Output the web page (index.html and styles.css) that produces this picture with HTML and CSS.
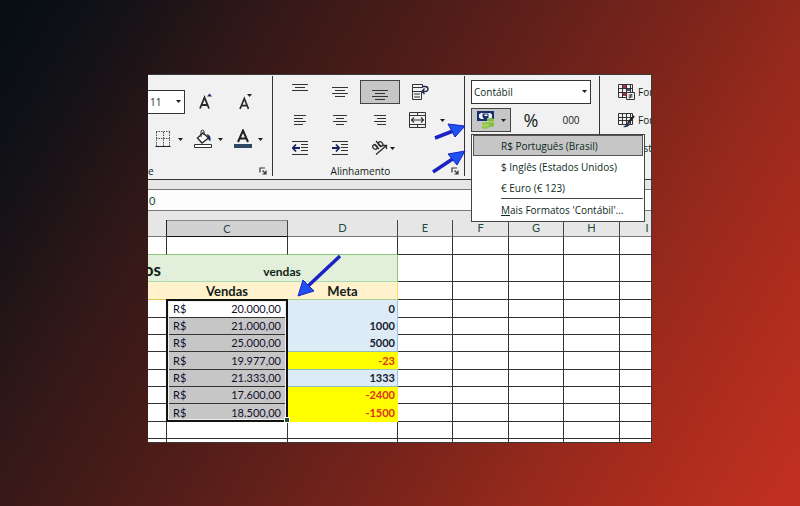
FILE: index.html
```html
<!DOCTYPE html>
<html lang="pt-BR">
<head>
  <meta charset="UTF-8" />
  <meta name="viewport" content="width=device-width, initial-scale=1.0" />
  <title>Formato Contábil</title>
  <link rel="stylesheet" href="styles.css">
</head>
<body>
  <svg class="defs" width="0" height="0" aria-hidden="true">
    <symbol id="caret" viewBox="0 0 5 3"><path d="M0 0h5L2.500 3z" fill="#1c1c1c"/></symbol>
    <symbol id="launcher" viewBox="0 0 8 8">
      <path d="M1 5.500V1h5M3.500 3.500l3 3M7 3.500V7H3.500" fill="none" stroke="#333" stroke-width="1.200"/>
    </symbol>
  </svg>

  <main class="window">
    <div class="ribbon">
      <section class="group group-font">
        <div class="row">
          <div class="select size">
            <select aria-label="Tamanho da fonte"><option>11</option></select>
            <svg class="caret"><use href="#caret"/></svg>
          </div>
          <button class="tool" aria-label="Aumentar fonte">
            <svg width="16" height="18" viewBox="0 0 16 18">
              <path d="M3 15.500L7.500 4.500 12 15.500M4.500 12h6" fill="none" stroke="#2a2a2a" stroke-width="1.800"/>
              <path d="M10 3.500h5l-2.500-3z" fill="#1d2b5e"/>
            </svg>
          </button>
          <button class="tool" aria-label="Diminuir fonte">
            <svg width="16" height="18" viewBox="0 0 16 18">
              <path d="M3 16L7.300 5.500l4.200 10.500M4.500 12.700h5.500" fill="none" stroke="#2a2a2a" stroke-width="1.700"/>
              <path d="M10 1h5l-2.500 3z" fill="#222"/>
            </svg>
          </button>
        </div>
        <div class="row row-second">
          <button class="tool" aria-label="Bordas">
            <svg width="18" height="18" viewBox="0 0 18 18">
              <path d="M2 1.500h14M2 8.500h14M2.500 2v14M9.500 2v14M15.500 2v14" fill="none" stroke="#555" stroke-dasharray="1.500 1"/>
              <path d="M1.500 16.500h15" stroke="#222"/>
            </svg>
            <svg class="caret"><use href="#caret"/></svg>
          </button>
          <button class="tool" aria-label="Cor de preenchimento">
            <svg width="18" height="20" viewBox="0 0 18 20">
              <path d="M9 4l5.500 5L8 14 3.500 9z" fill="#fff" stroke="#2a2a2a" stroke-width="1.400"/>
              <path d="M7 8V2q1.500-2 3 0v4" fill="none" stroke="#2a2a2a"/>
              <path d="M12.500 5q5 1 4 7-3-1-2.500-4z" fill="#1d2b5e"/>
              <path d="M.500 15.500h17v3H.500z" fill="#fff" stroke="#333"/>
            </svg>
            <svg class="caret"><use href="#caret"/></svg>
          </button>
          <button class="tool" aria-label="Cor da fonte">
            <svg width="18" height="20" viewBox="0 0 18 20">
              <path d="M4 13L9 1.500 14 13M6 9.500h6" fill="none" stroke="#222" stroke-width="2"/>
              <path d="M0 15h18v4H0z" fill="#2c4862"/>
            </svg>
            <svg class="caret"><use href="#caret"/></svg>
          </button>
        </div>
        <div class="group-label"><span class="cut">e</span><svg class="launcher"><use href="#launcher"/></svg></div>
      </section>

      <section class="group group-align">
        <div class="tools">
          <button class="tool" aria-label="Alinhar em cima">
            <svg width="16" height="18" viewBox="0 0 16 18"><path d="M0 1.500h16M3 4.500h10M0 7.500h16" stroke="#333"/></svg>
          </button>
          <button class="tool" aria-label="Alinhar no meio">
            <svg width="16" height="18" viewBox="0 0 16 18"><path d="M0 4.500h16M3 7.500h10M0 10.500h16M3 13.500h10" stroke="#333"/></svg>
          </button>
          <button class="tool pressed" aria-label="Alinhar embaixo">
            <svg width="16" height="18" viewBox="0 0 16 18"><path d="M0 7.500h16M3 10.500h10M0 13.500h16M3 16.500h10" stroke="#333"/></svg>
          </button>
          <button class="tool" aria-label="Quebrar texto">
            <svg width="18" height="18" viewBox="0 0 18 18" fill="none" stroke="#333">
              <path d="M1.500 1.500h10v3h-10zM1.500 8.500h9M1.500 8v8.500h9V8M3 11h6M3 14h6M1.500 4.500v4"/>
              <path d="M11 3.500h3q3 0 3 2.500t-3 2.500h-2M13.500 5.500L11 8.500l2.500 2.500" stroke="#1c2348" stroke-width="1.300"/>
            </svg>
          </button>
          <button class="tool" aria-label="Alinhar à esquerda">
            <svg width="16" height="12" viewBox="0 0 16 12"><path d="M2 1.500h12M2 4.500h9M2 7.500h12M2 10.500h9" stroke="#333"/></svg>
          </button>
          <button class="tool" aria-label="Centralizar">
            <svg width="16" height="12" viewBox="0 0 16 12"><path d="M1 1.500h14M4 4.500h8M1 7.500h14M4 10.500h8" stroke="#333"/></svg>
          </button>
          <button class="tool" aria-label="Alinhar à direita">
            <svg width="16" height="12" viewBox="0 0 16 12"><path d="M2 1.500h12M5 4.500h9M2 7.500h12M5 10.500h9" stroke="#333"/></svg>
          </button>
          <button class="tool merge" aria-label="Mesclar e centralizar">
            <svg width="17" height="18" viewBox="0 0 17 18" fill="none" stroke="#333">
              <path d="M.500 1.500h16v15H.500zM.500 4.500h16M.500 13.500h16M8.500 1.500v3M8.500 13.500v3"/>
              <path d="M2.500 9h12M5 6.500L2.500 9 5 11.500M12 6.500L14.500 9 12 11.500" stroke-width="1.200"/>
            </svg>
            <svg class="caret"><use href="#caret"/></svg>
          </button>
          <button class="tool" aria-label="Diminuir recuo">
            <svg width="16" height="14" viewBox="0 0 16 14" fill="none" stroke="#333">
              <path d="M0 .500h16M9 3.500h7M9 6.500h7M9 9.500h7M0 13.500h16"/>
              <path d="M8 7H1M4 3.500L.800 7 4 10.500" stroke="#16245c" stroke-width="1.800"/>
            </svg>
          </button>
          <button class="tool" aria-label="Aumentar recuo">
            <svg width="16" height="14" viewBox="0 0 16 14" fill="none" stroke="#333">
              <path d="M0 .500h16M9 3.500h7M9 6.500h7M9 9.500h7M0 13.500h16"/>
              <path d="M0 7h7M4 3.500L7.200 7 4 10.500" stroke="#16245c" stroke-width="1.800"/>
            </svg>
          </button>
          <button class="tool tight" aria-label="Orientação">
            <svg width="17" height="16" viewBox="0 0 17 16" fill="none" stroke="#2a2a2a" stroke-width="1.300">
              <ellipse cx="4" cy="7" rx="2" ry="2.500" transform="rotate(-45 4 7)"/>
              <path d="M3 4l5 5M5 1l5.500 6"/>
              <ellipse cx="9.500" cy="4" rx="2" ry="2.500" transform="rotate(-45 9.500 4)"/>
              <path d="M5 14.500L15.500 5.500M12 5.500h3.500V9"/>
            </svg>
            <svg class="caret"><use href="#caret"/></svg>
          </button>
        </div>
        <div class="group-label"><span class="name">Alinhamento</span><svg class="launcher"><use href="#launcher"/></svg></div>
      </section>

      <section class="group group-number">
        <div class="select format">
          <select aria-label="Formato de número"><option>Contábil</option></select>
          <svg class="caret"><use href="#caret"/></svg>
        </div>
        <div class="row">
          <button class="tool pressed" aria-label="Formato de número de contabilização">
            <svg width="18" height="18" viewBox="0 0 18 18">
              <path d="M0 0h17v10H0z" fill="#17306e"/>
              <path d="M2 3.500L4 2h9l2 1.500v3L13 8H4L2 6.500z" fill="#f4f6fa"/>
              <path d="M5.500 2.500h6V7l-2 1H7L5.500 6z" fill="#17306e"/>
              <path d="M7.500 3.500h3V5h-3z" fill="#fff"/>
              <path d="M10 8q4-2 7 0v7q-3 2-7 0z" fill="#7fbf4d"/>
              <path d="M5 12q3-2 7 0v5q-4 2-7 0z" fill="#8fc850"/>
              <path d="M5 14q3 1 7 0M10 10.500q3 1 7 0" fill="none" stroke="#d0d468"/>
            </svg>
            <svg class="caret"><use href="#caret"/></svg>
          </button>
          <button class="tool percent">%</button>
          <button class="tool">000</button>
        </div>
        <ul class="menu">
          <li><button class="item active">R$ Português (Brasil)</button></li>
          <li><button class="item">$ Inglês (Estados Unidos)</button></li>
          <li><button class="item">€ Euro (€ 123)</button></li>
          <li class="more"><button class="item"><u>M</u>ais Formatos 'Contábil'...</button></li>
        </ul>
      </section>

      <section class="group group-styles">
        <button class="style">
          <svg width="17" height="18" viewBox="0 0 17 18" fill="none" stroke="#333">
            <path d="M4 1h5v4H4zM4 9h4v4H4z" fill="#a83246" stroke="none"/>
            <path d="M9 5h3v3H9z" fill="#39528f" stroke="none"/>
            <path d="M.500 1.500h14v13H.500zM.500 5.500h14M.500 9.500h14M4.500 1v13M8.500 1v13M12.500 1v8"/>
            <path d="M8.500 9.500h8v7h-8z" fill="#f4f4f4"/>
            <path d="M10.500 12h4M10.500 14h4M13.500 11l-2 4.500"/>
          </svg>
          Formatação
        </button>
        <button class="style">
          <svg width="17" height="18" viewBox="0 0 17 18" fill="none" stroke="#333">
            <path d="M.500 2.500h14v11H.500zM.500 6.500h14M.500 9.500h14M4.500 2v11M8.500 2v11M12.500 2v11"/>
            <path d="M16 5l-6 7" stroke="#222" stroke-width="2"/>
            <path d="M10 11l2 2q-2 4-7 3 3-1 5-5z" fill="#26364f" stroke="none"/>
          </svg>
          Formatar
        </button>
        <button class="style">
          <svg width="17" height="18" viewBox="0 0 17 18" fill="none" stroke="#333"><path d="M.500 2.500h14v11H.500zM.500 6.500h14M4.500 2v11"/></svg>
          Estilos
        </button>
      </section>
    </div>

    <div class="formula">
      <input type="text" value="0" aria-label="Barra de fórmulas" />
    </div>

    <div class="sheet">
      <table>
        <colgroup>
          <col class="col-b"><col class="col-c"><col class="col-d"><col class="col-narrow"><col class="col-wide"><col class="col-narrow"><col class="col-wide"><col>
        </colgroup>
        <thead>
          <tr><th class="no-right"></th><th class="current">C</th><th>D</th><th>E</th><th>F</th><th>G</th><th>H</th><th>I</th></tr>
        </thead>
        <tbody>
          <tr class="blank"><td></td><td></td><td></td><td></td><td></td><td></td><td></td><td></td></tr>
          <tr class="title"><td class="head"><span class="cut-title">os</span></td><td class="head last" colspan="2">vendas</td><td></td><td></td><td></td><td></td><td></td></tr>
          <tr class="labels"><td class="head"></td><td class="head">Vendas</td><td class="head last">Meta</td><td></td><td></td><td></td><td></td><td></td></tr>
          <tr><td></td><td class="money first"><span class="selection"></span><div class="amount"><span>R$</span><span>20.000,00</span></div></td><td class="goal">0</td><td></td><td></td><td></td><td></td><td></td></tr>
          <tr><td></td><td class="money"><div class="amount"><span>R$</span><span>21.000,00</span></div></td><td class="goal">1000</td><td></td><td></td><td></td><td></td><td></td></tr>
          <tr><td></td><td class="money"><div class="amount"><span>R$</span><span>25.000,00</span></div></td><td class="goal end">5000</td><td></td><td></td><td></td><td></td><td></td></tr>
          <tr><td></td><td class="money"><div class="amount"><span>R$</span><span>19.977,00</span></div></td><td class="goal low end">-23</td><td></td><td></td><td></td><td></td><td></td></tr>
          <tr><td></td><td class="money"><div class="amount"><span>R$</span><span>21.333,00</span></div></td><td class="goal end">1333</td><td></td><td></td><td></td><td></td><td></td></tr>
          <tr><td></td><td class="money"><div class="amount"><span>R$</span><span>17.600,00</span></div></td><td class="goal low">-2400</td><td></td><td></td><td></td><td></td><td></td></tr>
          <tr><td></td><td class="money"><div class="amount"><span>R$</span><span>18.500,00</span></div></td><td class="goal low">-1500</td><td></td><td></td><td></td><td></td><td></td></tr>
          <tr><td></td><td></td><td></td><td></td><td></td><td></td><td></td><td></td></tr>
          <tr class="partial"><td></td><td></td><td></td><td></td><td></td><td></td><td></td><td></td></tr>
        </tbody>
      </table>
    </div>

    <svg class="arrows" width="502" height="367" viewBox="148 75 502 367" aria-hidden="true">
      <g stroke="#1a22c4" stroke-width="3.500">
        <path d="M435 138L453 131M433 172L454 158M340 256L307 287"/>
      </g>
      <g fill="#1f50f0" stroke="#1a22c4">
        <path d="M465 126L448 124 455 137z"/>
        <path d="M465 151L448 154 457 165z"/>
        <path d="M298 296L303 280 314 291z"/>
      </g>
    </svg>
  </main>
</body>
</html>
```
FILE: styles.css
```css
* {
  box-sizing: border-box;
}
body {
  margin: 0;
  min-height: 100vh;
  padding: 74px 148px 63px;
  font-family: "Open Sans", "Noto Sans", sans-serif;
  font-size: 10px;
  color: #111c18;
  background: linear-gradient(121deg, #070e13 2%, #131217 11%, #331818 25%, #451b18 35%, #5c1f1a 47%, #7a241b 62%, #94291c 74%, #a52b1d 82%, #c03020 98%);
  display: flex;
}
.defs {
  position: absolute;
}
button {
  margin: 0;
  padding: 0;
  border: 0;
  background: none;
  font: inherit;
  color: inherit;
}
svg {
  display: block;
  flex: none;
}
.window {
  position: relative;
  flex: 1;
  min-width: 0;
  display: flex;
  flex-direction: column;
  overflow: hidden;
  background: #fff;
  border: 1px solid #3a3a3a;
  border-left: 0;
}

/* ribbon */
.ribbon {
  display: flex;
  height: 105px;
  padding: 1px 0 3px;
  background: #f1f1f1;
  border-bottom: 1px solid #333;
}
.group {
  flex: none;
  display: flex;
  flex-direction: column;
  border-right: 1px solid #333;
}
.group-font {
  width: 125px;
  padding-top: 14px;
}
.group-align {
  width: 192px;
  padding: 4px 0 0 7px;
}
.group-number {
  position: relative;
  width: 135px;
  padding: 4px 8px 0 6px;
  gap: 4px;
}
.group-styles {
  flex: 1;
  min-width: 0;
  padding: 4px 0 0 18px;
  gap: 4px;
  border: 0;
  overflow: hidden;
}
.row {
  display: flex;
}
.row-second {
  margin-top: 13px;
}
.tool {
  width: 40px;
  height: 24px;
  display: flex;
  align-items: center;
  justify-content: center;
}
.row-second .tool {
  gap: 6px;
}
.pressed {
  background: #c6c6c6;
  border: 1px solid #444;
  gap: 6px;
}
.tools {
  display: grid;
  grid-template-columns: repeat(4, 40px);
  gap: 4px 0;
}
.merge {
  width: 54px;
  gap: 14px;
}
.tight {
  width: 46px;
  gap: 2px;
}
.caret {
  width: 5px;
  height: 3px;
}
.percent {
  font-size: 18px;
}
.select {
  position: relative;
}
.select select {
  appearance: none;
  width: 100%;
  height: 24px;
  padding: 0 2px;
  border: 1px solid #333;
  border-radius: 0;
  background: #fff;
  font: inherit;
  color: #102c22;
}
.select .caret {
  position: absolute;
  right: 4px;
  top: 10px;
}
.size {
  width: 37px;
}
.size select {
  border-left: 0;
}
.group-label {
  display: flex;
  align-items: center;
  margin-top: auto;
  padding-right: 5px;
  line-height: 10px;
}
.group-label .name {
  flex: 1;
  padding-right: 10px;
  text-align: center;
}
.group-label .launcher {
  width: 8px;
  height: 8px;
  margin-left: auto;
}
.style {
  display: flex;
  align-items: center;
  gap: 3px;
  height: 24px;
  white-space: nowrap;
}

/* currency drop-down */
.menu {
  position: absolute;
  z-index: 2;
  top: 58px;
  left: 6px;
  width: 174px;
  margin: 0;
  padding: 0 1px 1px;
  list-style: none;
  background: #fff;
  border: 1px solid #444;
}
.item {
  width: 100%;
  height: 21px;
  padding-left: 28px;
  display: block;
  text-align: left;
  white-space: nowrap;
  color: #0c2a20;
}
.item.active {
  padding-left: 27px;
  background: #c6c6c6;
  border: 1px solid #555;
}
.more {
  padding-top: 1px;
  background: linear-gradient(#444, #444) 28px 0 / 100% 1px no-repeat;
}

/* formula bar */
.formula {
  padding-top: 9px;
  background: #e6e6e6;
}
.formula input {
  display: block;
  width: 100%;
  height: 22px;
  padding: 0 1px;
  border: 1px solid #777;
  border-width: 1px 0;
  border-radius: 0;
  background: #fdfdfd;
  font-family: Lato, sans-serif;
  font-size: 11px;
  color: #1c4a30;
}

/* sheet */
.sheet {
  flex: 1;
  min-height: 0;
  padding-top: 9px;
  background: #e6e6e6;
  overflow: hidden;
}
table {
  width: calc(100% + 24px);
  table-layout: fixed;
  border-collapse: separate;
  border-spacing: 0;
  background: #fff;
  font-family: Lato, sans-serif;
  font-size: 11px;
  line-height: 14px;
}
.col-b { width: 19px; }
.col-c { width: 121px; }
.col-d { width: 110px; }
.col-narrow { width: 55px; }
.col-wide { width: 56px; }
th {
  height: 17px;
  padding: 0;
  font-weight: normal;
  color: #1f4a3e;
  background: #e6e6e6;
  border-right: 1px solid #444;
  border-bottom: 1px solid #777;
}
th.no-right {
  border-right-color: #222;
}
th.current {
  background: #d2d2d2;
  border-top: 1px solid #888;
  border-bottom-color: #111;
}
td {
  height: 17px;
  padding: 0;
  border-right: 1px solid #333;
  border-bottom: 1px solid #333;
}
tr:nth-child(3n+1) td,
.labels td {
  height: 18px;
}
.blank td:nth-child(-n+3) {
  border-bottom-color: #8cc97c;
}
.title td {
  height: 27px;
}
.title .head {
  padding-bottom: 2px;
  vertical-align: bottom;
  text-align: center;
  font-size: 12px;
  font-weight: bold;
  background: #e2efda;
  border-bottom-color: #a4dcb0;
  border-right-color: #e2efda;
}
.title .last {
  border-right-color: #8cc97c;
}
.cut-title {
  display: flex;
  justify-content: flex-end;
  padding-right: 5px;
  font-size: 17px;
  line-height: 18px;
}
.labels .head {
  text-align: center;
  font-size: 13px;
  font-weight: bold;
  background: #fff2cc;
  border-color: #fff2cc;
  border-bottom-color: #e6c84a;
}
.labels .last {
  border-right-color: #ffd966;
  border-bottom-color: #a9d08e;
}
.money {
  background: #c6c6c6;
}
.money.first {
  position: relative;
  background: #fff;
}
.amount {
  display: flex;
  justify-content: space-between;
  padding: 0 6px;
  color: #10102e;
}
.goal {
  padding-right: 2px;
  text-align: right;
  font-weight: bold;
  color: #16202c;
  background: #ddebf7;
  border-right-color: #9bc2e6;
  border-bottom-color: #ddebf7;
}
.goal.end {
  border-bottom-color: #8fbfb8;
}
.goal.low {
  color: #e0301a;
  background: #ff0;
  border-right-color: #ff0;
}
.goal.low:not(.end) {
  border-bottom-color: #ff0;
}
tr.partial td {
  height: 3px;
  border-bottom: 0;
}

/* frame round the seven selected cells */
.selection {
  position: absolute;
  top: -1px;
  left: -1px;
  width: 122px;
  height: 123px;
  border: 2px solid #111;
  box-shadow: inset 0 0 0 1px #eee;
}
.selection::after {
  content: "";
  position: absolute;
  right: -4px;
  bottom: -3px;
  width: 4px;
  height: 4px;
  background: #1f4a2c;
  border: 1px solid #fff;
  box-sizing: content-box;
}

.arrows {
  position: absolute;
  top: 0;
  left: 0;
  pointer-events: none;
}
```
